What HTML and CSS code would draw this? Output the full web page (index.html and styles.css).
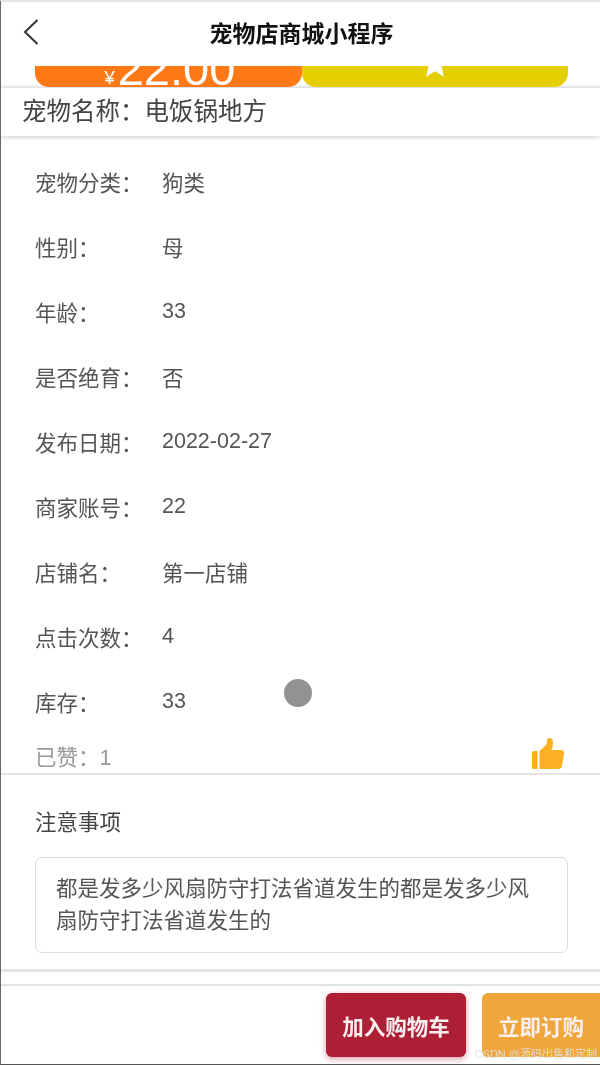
FILE: index.html
```html
<!DOCTYPE html>
<html lang="zh-CN">
<head>
    <meta charset="UTF-8">
    <meta name="viewport" content="width=device-width, initial-scale=1.0">
    <title>宠物店商城小程序</title>
    <link rel="stylesheet" href="styles.css">
</head>
<body>
    <div class="page">
        <header class="topbar">
            <svg class="back-icon" viewBox="0 0 18 28" width="18" height="28">
                <path d="M15.5 2 L3 14 L15.5 26" fill="none" stroke="#333" stroke-width="2"/>
            </svg>
            <h1 class="topbar-title">宠物店商城小程序</h1>
        </header>

        <div class="price-strip">
            <div class="price-btn price-orange"><span class="yen">¥</span><span class="amount">22.00</span></div>
            <div class="price-btn price-yellow">
                <svg class="star-icon" viewBox="0 0 24 24" width="30" height="30">
                    <path d="M12 1 L15.3 8.6 L23.5 9.4 L17.3 14.8 L19.1 22.9 L12 18.6 L4.9 22.9 L6.7 14.8 L.5 9.4 L8.7 8.6 Z" fill="#fff"/>
                </svg>
            </div>
        </div>

        <div class="name-bar">宠物名称：电饭锅地方</div>

        <ul class="info-list">
            <li class="info-row"><span class="info-label">宠物分类：</span><span>狗类</span></li>
            <li class="info-row"><span class="info-label">性别：</span><span>母</span></li>
            <li class="info-row"><span class="info-label">年龄：</span><span>33</span></li>
            <li class="info-row"><span class="info-label">是否绝育：</span><span>否</span></li>
            <li class="info-row"><span class="info-label">发布日期：</span><span>2022-02-27</span></li>
            <li class="info-row"><span class="info-label">商家账号：</span><span>22</span></li>
            <li class="info-row"><span class="info-label">店铺名：</span><span>第一店铺</span></li>
            <li class="info-row"><span class="info-label">点击次数：</span><span>4</span></li>
            <li class="info-row"><span class="info-label">库存：</span><span>33</span></li>
        </ul>

        <div class="like-row">
            <span>已赞：1</span>
            <svg class="thumb-icon" viewBox="0 0 34 34" width="34" height="34">
                <path d="M1 15.5 Q1 14 2.5 14 H6.5 V32 H2.5 Q1 32 1 30.5 Z" fill="#fbb024"/>
                <path d="M8.5 14 L14 9 Q16 7 16 4 Q16 1 18.5 1 Q22 1 22 6 Q22 10 20.5 13 H30 Q33.500 13 33 17 L31 29 Q30.500 32 27 32 H8.500 Z" fill="#fbb024"/>
            </svg>
        </div>

        <section class="notes">
            <h2 class="notes-title">注意事项</h2>
            <div class="notes-box">都是发多少风扇防守打法省道发生的都是发多少风扇防守打法省道发生的</div>
        </section>

        <div class="double-rule"></div>

        <footer class="actions">
            <button class="action-btn btn-cart">加入购物车</button>
            <button class="action-btn btn-order">立即订购</button>
        </footer>

        <div class="touch-dot"></div>
        <div class="watermark">CSDN @源码出售和定制</div>
    </div>
</body>
</html>
```

FILE: styles.css
```css
* {
    box-sizing: border-box;
}

body {
    margin: 0;
    padding: 0;
    background: #fff;
    font-family: "Liberation Sans", "Noto Sans CJK SC", sans-serif;
    color: #555;
    overflow: hidden;
}

.page {
    position: relative;
    width: 600px;
    height: 1065px;
    overflow: hidden;
    background: #fff;
    border-left: 1px solid #666;
    border-top: 2px solid #e6e6e6;
    border-bottom: 1px solid #555;
    filter: blur(0.5px);
}

.topbar {
    position: relative;
    height: 64px;
    display: flex;
    align-items: center;
    justify-content: center;
}

.back-icon {
    position: absolute;
    left: 21px;
    top: 16px;
}

.topbar-title {
    margin: 0 0 4px 2px;
    font-size: 23px;
    font-weight: bold;
    color: #111;
}

.price-strip {
    display: flex;
    height: 21px;
    margin-left: 34px;
    width: 533px;
}

.price-btn {
    flex: 1;
    height: 21px;
    overflow: hidden;
    display: flex;
    justify-content: center;
    align-items: flex-end;
    color: #fff;
    border-radius: 0 0 14px 14px;
}

.price-orange {
    background: #ff7a17;
}

.price-yellow {
    background: #e6cf00;
}

.yen {
    font-size: 19px;
    line-height: 19px;
    margin: 0 3px 0 3px;
}

.amount {
    font-size: 47px;
    line-height: 47px;
    margin-bottom: -5px;
}

.star-icon {
    margin-bottom: 9px;
    flex: none;
}

.name-bar {
    height: 48px;
    margin-top: 1px;
    padding: 0 0 5px 21px;
    display: flex;
    align-items: center;
    font-size: 24.5px;
    color: #444;
    background: #fff;
    box-shadow: 0 -2px 3px rgba(0, 0, 0, 0.12), 0 2px 4px rgba(0, 0, 0, 0.15);
}

.info-list {
    list-style: none;
    margin: 13px 0 0;
    padding: 0 0 0 34px;
}

.info-row {
    display: flex;
    align-items: center;
    height: 65px;
    font-size: 21.5px;
    color: #555;
}

.info-label {
    width: 127px;
}

.like-row {
    display: flex;
    justify-content: space-between;
    align-items: center;
    height: 38px;
    margin-top: 3px;
    padding: 0 35px 0 34px;
    font-size: 21.5px;
    color: #999;
    border-bottom: 2px solid #e4e4e4;
}

.thumb-icon {
    margin-top: -3px;
}

.notes {
    padding: 0 32px 0 34px;
}

.notes-title {
    margin: 33px 0 19px;
    font-size: 21.5px;
    font-weight: normal;
    line-height: 30px;
    color: #444;
}

.notes-box {
    height: 96px;
    padding: 15px 20px;
    font-size: 21.5px;
    line-height: 32px;
    color: #555;
    border: 1.5px solid #ddd;
    border-radius: 7px;
}

.double-rule {
    height: 17px;
    margin-top: 16px;
    border-top: 3px solid #e4e4e4;
    border-bottom: 2px solid #dfe3e3;
}

.actions {
    display: flex;
    justify-content: flex-end;
    gap: 16px;
    margin-top: 7px;
}

.action-btn {
    height: 64px;
    border: none;
    border-radius: 6px;
    font-family: inherit;
    font-size: 21.5px;
    font-weight: bold;
    color: #fbeeee;
}

.btn-cart {
    width: 140px;
    background: #ad1f35;
    box-shadow: 0 2px 6px rgba(173, 31, 53, 0.45);
}

.btn-order {
    width: 118px;
    background: #efa63a;
    border-radius: 6px 0 0 6px;
}

.touch-dot {
    position: absolute;
    left: 283px;
    top: 677px;
    width: 28px;
    height: 28px;
    border-radius: 50%;
    background: #929292;
}

.watermark {
    position: absolute;
    right: 3px;
    bottom: 3px;
    font-size: 11px;
    line-height: 14px;
    color: rgba(225, 225, 225, 0.9);
}
```
